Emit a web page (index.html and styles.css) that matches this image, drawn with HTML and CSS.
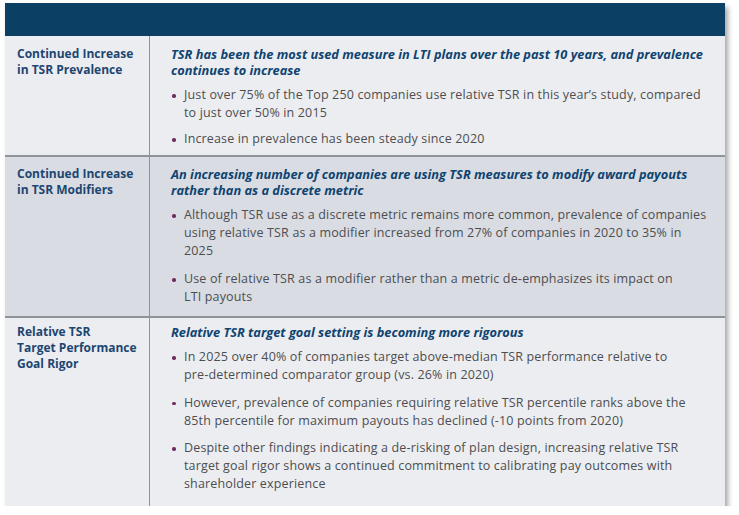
FILE: index.html
```html
<!DOCTYPE html>
<html lang="en">
<head>
<meta charset="utf-8">
<title>TSR Trends</title>
<link rel="stylesheet" href="styles.css">
</head>
<body>
<div class="card">
  <div class="head"></div>
  <div class="row r1">
    <div class="label">Continued Increase<br>in TSR Prevalence</div>
    <div class="body">
      <p class="lead">TSR has been the most used measure in LTI plans over the past 10 years, and prevalence continues to increase</p>
      <ul>
        <li>Just over 75% of the Top 250 companies use relative TSR in this year’s study, compared to just over 50% in 2015</li>
        <li>Increase in prevalence has been steady since 2020</li>
      </ul>
    </div>
  </div>
  <div class="row r2">
    <div class="label">Continued Increase<br>in TSR Modifiers</div>
    <div class="body">
      <p class="lead">An increasing number of companies are using TSR measures to modify award payouts rather than as a discrete metric</p>
      <ul>
        <li>Although TSR use as a discrete metric remains more common, prevalence of companies using relative TSR as a modifier increased from 27% of companies in 2020 to 35% in 2025</li>
        <li>Use of relative TSR as a modifier rather than a metric de&#8209;emphasizes its impact on<br>LTI payouts</li>
      </ul>
    </div>
  </div>
  <div class="row r3">
    <div class="label">Relative TSR<br>Target Performance<br>Goal Rigor</div>
    <div class="body">
      <p class="lead">Relative TSR target goal setting is becoming more rigorous</p>
      <ul>
        <li>In 2025 over 40% of companies target above&#8209;median TSR performance relative to pre&#8209;determined comparator group (vs. 26% in 2020)</li>
        <li>However, prevalence of companies requiring relative TSR percentile ranks above the 85th percentile for maximum payouts has declined (-10 points from 2020)</li>
        <li>Despite other findings indicating a de&#8209;risking of plan design, increasing relative TSR target goal rigor shows a continued commitment to calibrating pay outcomes with shareholder experience</li>
      </ul>
    </div>
  </div>
</div>
</body>
</html>
```

FILE: styles.css
```css
* { box-sizing: border-box; }
html, body { margin: 0; padding: 0; background: #ffffff; }
body {
  font-family: "Open Sans", "Liberation Sans", sans-serif;
  padding: 3px 0 0 5px;
}
.card {
  width: 720px;
  background: #ecedf1;
  box-shadow: 3px 4px 5px rgba(0, 0, 0, 0.35);
}
.head {
  height: 33px;
  background: #0b3f64;
}
.row {
  display: grid;
  grid-template-columns: 145px 1fr;
  border-bottom: 2px solid #8f949b;
}
.row:last-child { border-bottom: none; }
.r2 { background: #d9dce3; }
.label {
  border-right: 1.5px solid #8f949b;
  padding: 10px 8px 0 12px;
  font-weight: 700;
  font-size: 12px;
  line-height: 16px;
  color: #1d4670;
}
.body {
  padding: 10px 16px 7px 21px;
}
.r2 .label, .r2 .body { padding-top: 9px; }
.r2 .body { padding-bottom: 10px; }
.r3 .label, .r3 .body { padding-top: 6px; }
.r3 .body { padding-bottom: 13px; }
.lead {
  margin: 0 0 8px;
  font-weight: 700;
  font-style: italic;
  font-size: 12.8px;
  line-height: 16px;
  color: #0f4470;
}
ul {
  list-style: none;
  margin: 0;
  padding: 0;
}
li {
  position: relative;
  padding-left: 13px;
  margin-bottom: 8px;
  font-size: 12.5px;
  letter-spacing: 0.15px;
  line-height: 18px;
  color: #4d4e50;
}
.r2 li { margin-bottom: 10px; }
.r3 li { margin-bottom: 9.5px; }
li:last-child { margin-bottom: 0; }
li::before {
  content: "";
  position: absolute;
  left: 1px;
  top: 8px;
  width: 3.5px;
  height: 3.5px;
  border-radius: 50%;
  background: #6e2d5c;
}
```
